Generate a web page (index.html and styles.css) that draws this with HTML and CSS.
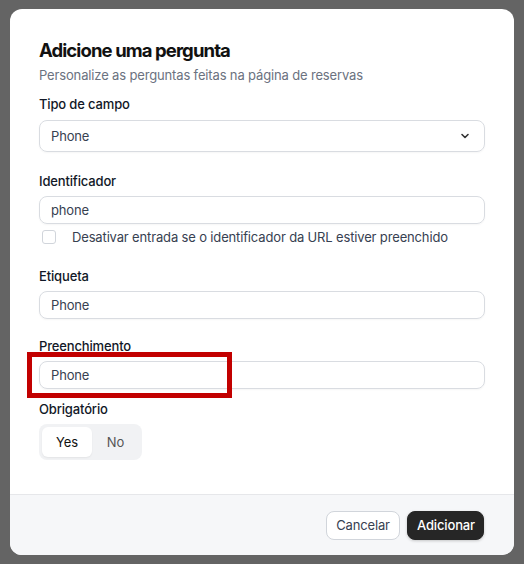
FILE: index.html
```html
<!DOCTYPE html>
<html lang="pt">
<head>
<meta charset="utf-8">
<link rel="stylesheet" href="styles.css">
</head>
<body>
<div class="modal">
  <div class="content">
    <h1 class="title">Adicione uma pergunta</h1>
    <p class="subtitle">Personalize as perguntas feitas na página de reservas</p>

    <div class="label g1">Tipo de campo</div>
    <div class="select">
      <span>Phone</span>
      <svg class="chev" width="12" height="12" viewBox="0 0 12 12"><path d="M3 4.5 L6 7.5 L9 4.5" fill="none" stroke="#333" stroke-width="1.6" stroke-linecap="round" stroke-linejoin="round"/></svg>
    </div>

    <div class="label g2">Identificador</div>
    <div class="input">phone</div>
    <label class="check-row"><span class="box"></span><span>Desativar entrada se o identificador da URL estiver preenchido</span></label>

    <div class="label g3">Etiqueta</div>
    <div class="input">Phone</div>

    <div class="label g4">Preenchimento</div>
    <div class="field-wrap">
      <div class="input">Phone</div>
      <div class="highlight"></div>
    </div>

    <div class="label g5">Obrigatório</div>
    <div class="toggle">
      <span class="opt active">Yes</span>
      <span class="opt">No</span>
    </div>
  </div>
  <div class="footer">
    <button class="btn secondary">Cancelar</button>
    <button class="btn primary">Adicionar</button>
  </div>
</div>
</body>
</html>
```
FILE: styles.css
```css
* { box-sizing: border-box; }
html, body { margin: 0; }
body {
  background: #646464;
  padding: 9px 10px;
  font-family: Inter, "Noto Sans", sans-serif;
  letter-spacing: -0.15px;
  height: 564px;
}
.modal {
  width: 504px;
  height: 546px;
  background: #fff;
  border-radius: 12px;
  overflow: hidden;
  display: flex;
  flex-direction: column;
}
.content {
  flex: 1;
  padding: 29px 29px 0 29px;
  display: flex;
  flex-direction: column;
  align-items: stretch;
}
.title {
  margin: 0;
  font-size: 18.5px;
  line-height: 24px;
  font-weight: 700;
  letter-spacing: -0.9px;
  color: #111;
}
.subtitle {
  margin: 4px 0 0;
  font-size: 13px;
  line-height: 18px;
  color: #6b7280;
}
.label {
  font-size: 13px;
  line-height: 18px;
  font-weight: 500;
  color: #111827;
}
.g1 { margin-top: 11px; }
.g2 { margin-top: 20px; }
.g3 { margin-top: 21px; }
.g4 { margin-top: 18px; }
.g5 { margin-top: 11px; }
.select {
  margin-top: 7px;
  height: 32px;
  border: 1px solid #d9dce1;
  border-radius: 8px;
  display: flex;
  align-items: center;
  justify-content: space-between;
  padding: 0 13px 0 11px;
  font-size: 13px;
  color: #374151;
  box-shadow: 0 1px 2px rgba(0,0,0,0.04);
}
.chev { display: block; }
.input {
  margin-top: 6px;
  height: 28px;
  border: 1px solid #d9dce1;
  border-radius: 8px;
  display: flex;
  align-items: center;
  padding: 0 11px;
  font-size: 13px;
  color: #374151;
  box-shadow: 0 1px 2px rgba(0,0,0,0.04);
}
.field-wrap { position: relative; }
.highlight {
  position: absolute;
  left: -12px;
  top: -3px;
  width: 205px;
  height: 46px;
  border: 5px solid #c20000;
}
.check-row {
  margin-top: 4px;
  display: flex;
  align-items: center;
  height: 18px;
  font-size: 13px;
  color: #374151;
  padding-left: 3px;
}
.box {
  width: 14px;
  height: 14px;
  border: 1px solid #d1d5db;
  border-radius: 3px;
  margin-right: 16px;
  flex: none;
}
.toggle {
  margin-top: 6px;
  align-self: flex-start;
  display: flex;
  background: #f1f2f4;
  border-radius: 8px;
  padding: 3px;
  height: 36px;
}
.opt {
  width: 47px;
  display: flex;
  align-items: center;
  justify-content: center;
  font-size: 13px;
  color: #555;
  border-radius: 6px;
}
.opt.active {
  width: 50px;
  background: #fff;
  color: #111;
  box-shadow: 0 1px 2px rgba(0,0,0,0.06);
}
.footer {
  height: 61px;
  flex: none;
  border-top: 1px solid #e6e7ea;
  background: #f6f7f9;
  display: flex;
  align-items: center;
  justify-content: flex-end;
  gap: 7px;
  padding: 0 30px 0 0;
}
.btn {
  font-family: inherit;
  letter-spacing: inherit;
  font-size: 13px;
  height: 29px;
  border-radius: 8px;
  padding: 0 9px;
  cursor: pointer;
}
.secondary {
  width: 74px;
  background: #fff;
  border: 1px solid #d1d5db;
  color: #374151;
}
.primary {
  width: 77px;
  background: #262626;
  border: 1px solid #262626;
  color: #fff;
  font-weight: 500;
  box-shadow: 0 1px 3px rgba(0,0,0,0.2);
}
```
